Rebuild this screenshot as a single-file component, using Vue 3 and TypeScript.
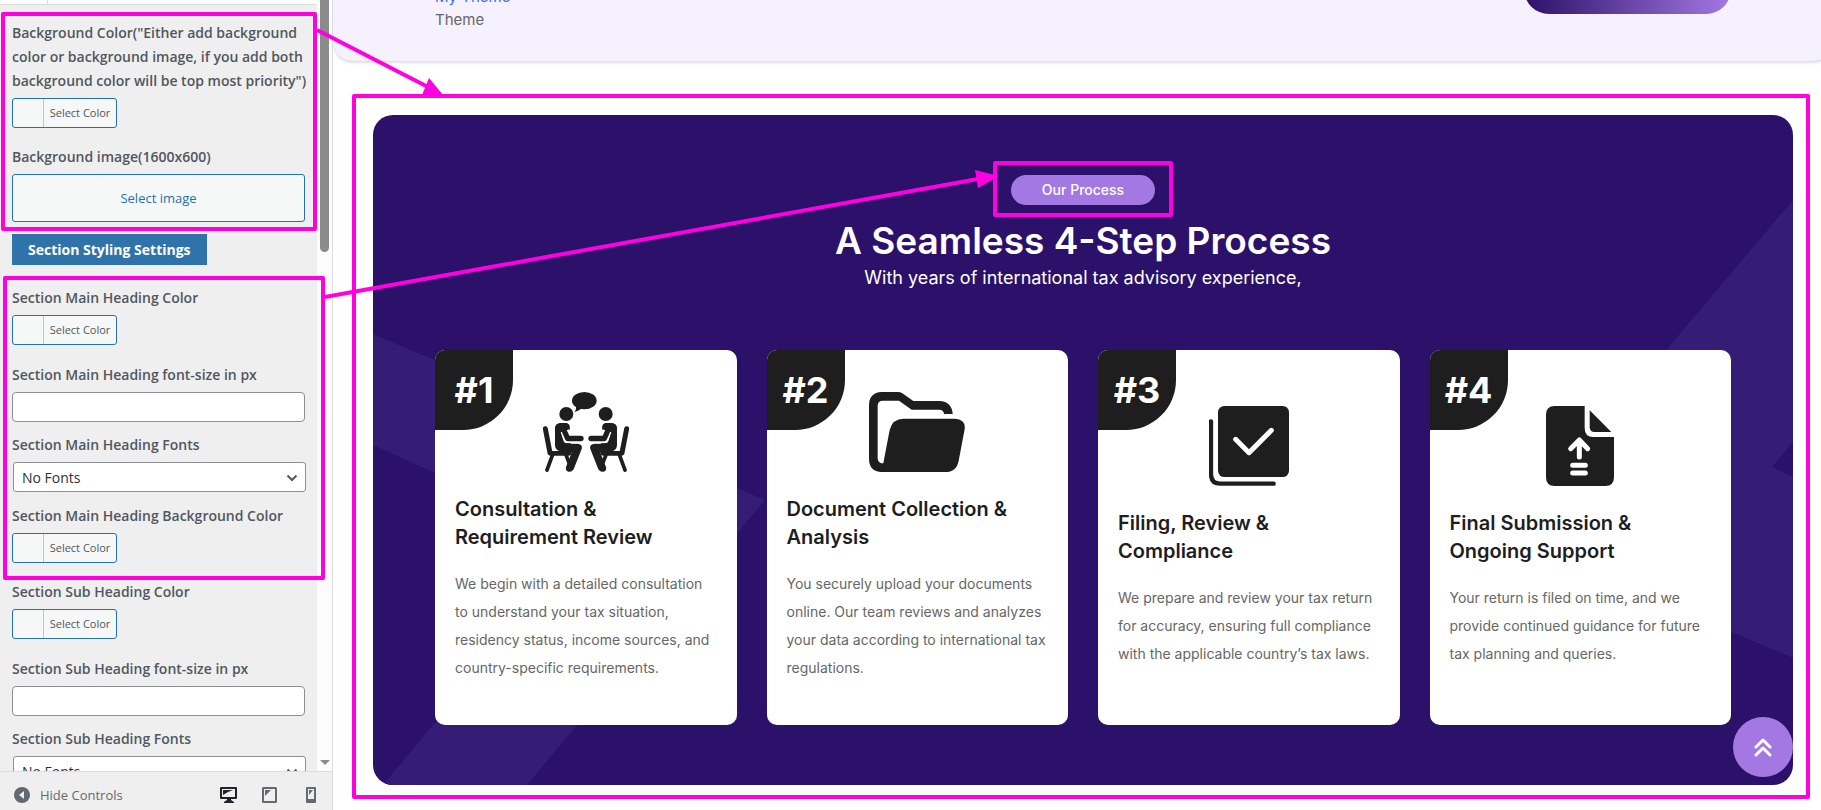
<script setup lang="ts">
type FieldKind = 'color' | 'image' | 'text' | 'select' | 'title'

interface Field {
  id: string
  kind: FieldKind
  label: string
}

interface Step {
  number: string
  icon: 'meeting' | 'folder' | 'check' | 'upload'
  title: string
  text: string
}

const fields: Field[] = [
  {
    id: 'bg-color',
    kind: 'color',
    label:
      'Background Color("Either add background color or background image, if you add both background color will be top most priority")',
  },
  { id: 'bg-image', kind: 'image', label: 'Background image(1600x600)' },
  { id: 'styling', kind: 'title', label: 'Section Styling Settings' },
  { id: 'main-color', kind: 'color', label: 'Section Main Heading Color' },
  { id: 'main-size', kind: 'text', label: 'Section Main Heading font-size in px' },
  { id: 'main-font', kind: 'select', label: 'Section Main Heading Fonts' },
  { id: 'main-bg', kind: 'color', label: 'Section Main Heading Background Color' },
  { id: 'sub-color', kind: 'color', label: 'Section Sub Heading Color' },
  { id: 'sub-size', kind: 'text', label: 'Section Sub Heading font-size in px' },
  { id: 'sub-font', kind: 'select', label: 'Section Sub Heading Fonts' },
]

const steps: Step[] = [
  {
    number: '#1',
    icon: 'meeting',
    title: 'Consultation & Requirement Review',
    text: 'We begin with a detailed consultation to understand your tax situation, residency status, income sources, and country-specific requirements.',
  },
  {
    number: '#2',
    icon: 'folder',
    title: 'Document Collection & Analysis',
    text: 'You securely upload your documents online. Our team reviews and analyzes your data according to international tax regulations.',
  },
  {
    number: '#3',
    icon: 'check',
    title: 'Filing, Review & Compliance',
    text: 'We prepare and review your tax return for accuracy, ensuring full compliance with the applicable country’s tax laws.',
  },
  {
    number: '#4',
    icon: 'upload',
    title: 'Final Submission & Ongoing Support',
    text: 'Your return is filed on time, and we provide continued guidance for future tax planning and queries.',
  },
]
</script>

<template>
  <div class="customizer">
    <aside class="sidebar">
      <div class="panel">
        <div class="panel-main">
          <div class="tabs"><span class="tab"></span></div>
          <div class="fields">
            <template v-for="f in fields" :key="f.id">
              <h3 v-if="f.kind === 'title'" class="group-title">{{ f.label }}</h3>
              <div v-else class="field" :class="`field-${f.kind}`">
                <label class="label" :for="f.id">{{ f.label }}</label>
                <button v-if="f.kind === 'color'" :id="f.id" type="button" class="color-btn">
                  <span class="swatch"></span><span class="color-text">Select Color</span>
                </button>
                <button v-else-if="f.kind === 'image'" :id="f.id" type="button" class="image-btn">
                  Select image
                </button>
                <input v-else-if="f.kind === 'text'" :id="f.id" type="text" class="text-input" />
                <div v-else class="select-wrap">
                  <select :id="f.id" class="select">
                    <option>No Fonts</option>
                  </select>
                  <svg class="chevron" width="12" height="8" viewBox="0 0 12 8" aria-hidden="true">
                    <path d="M1.5 1.5 6 6l4.500-4.500" fill="none" stroke="#50575e" stroke-width="2" />
                  </svg>
                </div>
              </div>
            </template>
          </div>
        </div>
        <div class="scrollbar">
          <div class="thumb"></div>
          <div class="scroll-down"></div>
        </div>
      </div>
      <footer class="actions">
        <button type="button" class="collapse">
          <svg width="16" height="16" viewBox="0 0 16 16" aria-hidden="true">
            <circle cx="8" cy="8" r="8" fill="#646970" />
            <path d="M10 4v8L5 8z" fill="#f0f0f0" />
          </svg>
          <span>Hide Controls</span>
        </button>
        <div class="devices">
          <button type="button" class="device" aria-label="Desktop preview">
            <svg width="17" height="16" viewBox="0 0 17 16">
              <path
                fill="#1d2327"
                fill-rule="evenodd"
                d="M1 0h15a1 1 0 0 1 1 1v10a1 1 0 0 1-1 1h-5v1l3 2v1H4v-1l3-2v-1H1a1 1 0 0 1-1-1V1a1 1 0 0 1 1-1zm1 2v8h13V2z"
              />
              <path fill="#1d2327" d="M3 3h10L8 5 3 8z" />
            </svg>
          </button>
          <button type="button" class="device" aria-label="Tablet preview">
            <svg width="15" height="16" viewBox="0 0 15 16">
              <rect x="1" y="1" width="13" height="14" rx="0.500" fill="none" stroke="#646970" stroke-width="2" />
              <path fill="#646970" d="M3 3h6L3 9z" />
            </svg>
          </button>
          <button type="button" class="device" aria-label="Phone preview">
            <svg width="10" height="16" viewBox="0 0 10 16">
              <path
                fill="#646970"
                fill-rule="evenodd"
                d="M1 0h8a1 1 0 0 1 1 1v14a1 1 0 0 1-1 1H1a1 1 0 0 1-1-1V1a1 1 0 0 1 1-1zm1 2v10h6V2z"
              />
              <path fill="#646970" d="M3 3h4L3 8z" />
            </svg>
          </button>
        </div>
      </footer>
    </aside>

    <main class="preview">
      <div class="page">
        <header class="theme-header">
          <div class="brand">
            <a href="#" class="brand-link">My Theme</a>
            <span class="brand-sub">Theme</span>
          </div>
          <button type="button" class="cta" aria-label="Get started"></button>
        </header>

        <section class="process">
          <svg class="shapes" viewBox="0 0 1420 670" preserveAspectRatio="none" aria-hidden="true">
            <path d="M0 219 392 385 154 670H10L213 426 0 330z" />
            <path d="M1420 85V327L1399 352 1420 362V543L1135 422z" />
          </svg>
          <span class="pill">Our Process</span>
          <h1 class="heading">A Seamless 4-Step Process</h1>
          <p class="lead">With years of international tax advisory experience,</p>
          <div class="cards">
            <article v-for="s in steps" :key="s.number" class="card">
              <span class="badge">{{ s.number }}</span>
              <svg v-if="s.icon === 'meeting'" class="icon" width="86" height="80" viewBox="0 0 258 240">
                <ellipse cx="124" cy="26" rx="37" ry="26" />
                <path d="M98 40Q102 52 94 60 110 57 118 46z" />
                <g v-for="side in 2" :key="side" :transform="side === 2 ? 'translate(258 0) scale(-1 1)' : undefined">
                  <circle cx="70" cy="66" r="21" />
                  <g fill="none" stroke="#1e1e1e" stroke-linecap="round" stroke-linejoin="round">
                    <path d="M7 110 21 182" stroke-width="15" />
                    <path d="M22 184H78" stroke-width="14" />
                    <path d="M29 188 12 234M68 186 78 212" stroke-width="11" />
                  </g>
                  <path d="M36 112Q36 93 55 93H66Q80 93 80 107V122L84 155H104Q120 157 116 171L92 232Q84 243 73 238 67 234 69 225L86 182H66Q36 180 36 160z" />
                  <path d="M66 116 74 140H121" fill="none" stroke="#fff" stroke-width="28" stroke-linejoin="round" />
                  <path d="M36 112Q36 93 55 93H66Q80 93 80 107V112L62 108 50 112 62 153 84 155 60 168 36 160z" />
                  <path d="M60 108 74 139.500H114" fill="none" stroke="#1e1e1e" stroke-width="16" stroke-linecap="round" stroke-linejoin="round" />
                </g>
              </svg>
              <svg v-else-if="s.icon === 'folder'" class="icon" width="96" height="80" viewBox="0 0 288 240">
                <path
                  d="M38 0H86Q94 0 100 4L133 27H210C238 27 251 46 251 66H225C225 58 220 53 210 53H128L90 26H42Q26 26 26 42V200Q28 214 43 214L62 114Q70 80 104 80H258Q291 82 287 112L269 206Q263 240 228 240H38Q0 238 0 200V40Q0 2 38 0z"
                />
              </svg>
              <svg v-else-if="s.icon === 'check'" class="icon" width="80" height="80" viewBox="0 0 240 240">
                <rect x="27" width="213" height="213" rx="19" />
                <path d="M6 46V204Q6 233 34 233H194" fill="none" stroke="#1e1e1e" stroke-width="13" stroke-linecap="round" />
                <path d="M80 100 120 140 187 73" fill="none" stroke="#fff" stroke-width="15" stroke-linecap="round" stroke-linejoin="round" />
              </svg>
              <svg v-else class="icon" width="68" height="80" viewBox="0 0 204 240">
                <path d="M26 0H116V66Q116 93 142 93H204V214Q204 240 178 240H26Q0 240 0 214V26Q0 0 26 0z" />
                <path d="M131 13 196 78H146Q131 78 131 63z" />
                <path
                  d="M100 153V103M74 128 100 102 125 128M80 178H118M80 201H118"
                  fill="none"
                  stroke="#fff"
                  stroke-width="15"
                  stroke-linecap="round"
                  stroke-linejoin="round"
                />
              </svg>
              <h2 class="card-title">{{ s.title }}</h2>
              <p class="card-text">{{ s.text }}</p>
            </article>
          </div>
        </section>
      </div>
      <a href="#" class="to-top" aria-label="Back to top">
        <svg width="18" height="19" viewBox="0 0 18 19" fill="none" stroke="#fff" stroke-width="3" stroke-linecap="round" stroke-linejoin="round">
          <path d="M2 9 9 2l7 7M2 17l7-7 7 7" />
        </svg>
      </a>
    </main>

    <!-- Callouts linking each control group to the part of the preview it changes -->
    <svg class="callouts" aria-hidden="true">
      <g fill="none" stroke="#ff00e1" stroke-width="4" stroke-linejoin="round">
        <rect x="3" y="14" width="312" height="215" />
        <rect x="5" y="278" width="318" height="300" />
        <rect x="354" y="96" width="1454" height="701" />
        <rect x="995" y="163" width="176" height="52" />
        <path d="M317 30 428 87M325 297 978 179" />
      </g>
      <path d="M422 95 429 78 443 95zM975 170 999 176 978 188z" fill="#ff00e1" />
    </svg>
  </div>
</template>

<style>
body {
  margin: 0;
  background: #fff;
}
</style>

<style scoped>
* {
  box-sizing: border-box;
}
button,
input,
select {
  font: inherit;
  margin: 0;
}
.customizer {
  position: relative;
  display: flex;
  height: 100vh;
  overflow: hidden;
  font-family: Inter, 'Liberation Sans', sans-serif;
}
.sidebar {
  display: flex;
  flex-direction: column;
  flex: 0 0 333px;
  min-height: 0;
  background: #efefef;
  border-right: 1px solid #dcdcde;
  font-family: 'Open Sans', 'Noto Sans', sans-serif;
}
.panel {
  flex: 1;
  display: flex;
  min-height: 0;
  overflow: hidden;
}
.panel-main {
  flex: 1;
  min-width: 0;
}
.tabs {
  display: flex;
  height: 5px;
  background: #fff;
  border-bottom: 1px solid #dcdcde;
}
.tab {
  width: 48px;
  border-right: 1px solid #dcdcde;
}
.fields {
  padding: 16px 12px 0;
}
.field {
  display: flex;
  flex-direction: column;
  align-items: flex-start;
  gap: 5px;
  margin-top: 17px;
}
.field:first-child {
  margin-top: 0;
}
.field-text {
  margin-top: 18px;
}
.field-select {
  margin-top: 11px;
}
.field-select + .field-color {
  margin-top: 12px;
}
.group-title + .field {
  margin-top: 21px;
}
.label {
  margin-right: -12px;
  font-size: 14px;
  line-height: 24px;
  font-weight: 600;
  color: #50575e;
}
.color-btn {
  display: flex;
  width: 105px;
  height: 30px;
  padding: 0;
  background: #f6f8f8;
  border: 1px solid #2271b1;
  border-radius: 3px;
  color: #50575e;
  font-size: 11px;
  line-height: 28px;
  white-space: nowrap;
}
.swatch {
  flex: 0 0 30px;
}
.color-text {
  flex: 1;
  border-left: 1px solid #c3c4c7;
  text-align: center;
}
.image-btn {
  width: 100%;
  height: 48px;
  background: #f6f8f8;
  border: 1px solid #2271b1;
  border-radius: 3px;
  color: #2271b1;
  font-size: 13px;
}
.group-title {
  width: fit-content;
  margin: 12px 0 0;
  padding: 0 16px;
  background: #3073aa;
  color: #fff;
  font-size: 14px;
  line-height: 31px;
  font-weight: 700;
}
.text-input,
.select {
  width: 100%;
  height: 30px;
  padding: 0 8px;
  background: #fff;
  border: 1px solid #8c8f94;
  border-radius: 4px;
  color: #2c3338;
  font-size: 14px;
}
.select {
  appearance: none;
  border-radius: 3px;
}
.select-wrap {
  position: relative;
  left: 1px;
  width: 100%;
}
.chevron {
  position: absolute;
  right: 8px;
  top: 12px;
}
.scrollbar {
  display: flex;
  flex-direction: column;
  justify-content: space-between;
  align-items: center;
  flex: 0 0 15px;
  padding-bottom: 6px;
  background: #fcfcfc;
}
.thumb {
  width: 9px;
  height: 252px;
  background: #8b8b8b;
  border-radius: 0 0 5px 5px;
}
.scroll-down {
  border: 5px solid transparent;
  border-top-color: #8b8b8b;
  border-bottom: 0;
}
.actions {
  display: flex;
  justify-content: space-between;
  align-items: center;
  height: 39px;
  padding: 8px 13px 0 14px;
  border-top: 1px solid #dcdcde;
}
.collapse {
  display: flex;
  align-items: center;
  gap: 10px;
  padding: 0;
  border: 0;
  background: none;
  color: #646970;
  font-size: 13px;
  line-height: 20px;
}
.devices {
  display: flex;
  align-items: center;
  gap: 24px;
}
.device {
  display: flex;
  justify-content: center;
  width: 17px;
  padding: 0;
  border: 0;
  background: none;
}
.preview {
  position: relative;
  flex: 1;
  min-width: 0;
  overflow: hidden;
}
/* The previewed page runs a little wider than its frame */
.page {
  margin-right: -12px;
}
.theme-header {
  display: flex;
  justify-content: space-between;
  align-items: flex-start;
  height: 62px;
  padding: 0 102px;
  background: #f5f1ff;
  border-bottom: 1px solid #e2deec;
  border-radius: 0 0 20px 20px;
  box-shadow: 0 1px 3px rgba(0, 0, 0, 0.12);
}
.brand {
  display: flex;
  flex-direction: column;
  margin-top: -15px;
  font-size: 15px;
  line-height: 23px;
}
.brand-link {
  color: #3b6cff;
  text-decoration: none;
}
.brand-sub {
  color: #666;
}
.cta {
  width: 207px;
  height: 50px;
  margin-top: -36px;
  border: 0;
  border-radius: 25px;
  background: linear-gradient(90deg, #2b1169, #a478e2);
}
.process {
  position: relative;
  display: flex;
  flex-direction: column;
  align-items: center;
  margin: 53px 40px 0;
  padding: 60px 62px;
  background: #2b1169;
  border-radius: 20px;
  overflow: hidden;
  color: #fff;
}
.shapes {
  position: absolute;
  inset: 0;
  width: 100%;
  height: 100%;
  fill: #351c75;
}
.pill {
  position: relative;
  padding: 0 31px;
  background: #a478e2;
  border-radius: 15px;
  font-size: 14px;
  line-height: 30px;
  font-weight: 500;
}
.heading {
  position: relative;
  margin: 12px 0 0;
  font-size: 37px;
  line-height: 48px;
  font-weight: 600;
  white-space: nowrap;
}
.lead {
  position: relative;
  margin: 0;
  font-size: 18px;
  line-height: 26px;
}
.cards {
  position: relative;
  display: grid;
  grid-template-columns: repeat(4, 1fr);
  gap: 30px;
  align-self: stretch;
  margin-top: 59px;
}
.card {
  position: relative;
  display: flex;
  flex-direction: column;
  justify-content: center;
  min-height: 375px;
  padding: 42px 20px 43px;
  background: #fff;
  border-radius: 10px;
  overflow: hidden;
  color: #1e1e1e;
}
.badge {
  position: absolute;
  left: 0;
  top: 0;
  width: 78px;
  background: #1e1e1e;
  border-bottom-right-radius: 50px;
  color: #fff;
  font-size: 36px;
  line-height: 80px;
  font-weight: 700;
  text-align: center;
}
.icon {
  align-self: center;
  fill: #1e1e1e;
}
.card-title {
  margin: 23px 0 19px;
  padding-right: 30px;
  font-size: 20px;
  line-height: 28px;
  font-weight: 600;
}
.card-text {
  margin: 0;
  color: #666;
  font-size: 14px;
  line-height: 28px;
}
.to-top {
  position: absolute;
  right: 28px;
  bottom: 33px;
  display: flex;
  align-items: center;
  justify-content: center;
  width: 60px;
  height: 60px;
  background: #a478e2;
  border-radius: 50%;
}
.callouts {
  position: absolute;
  inset: 0;
  width: 100%;
  height: 100%;
  pointer-events: none;
}
</style>
